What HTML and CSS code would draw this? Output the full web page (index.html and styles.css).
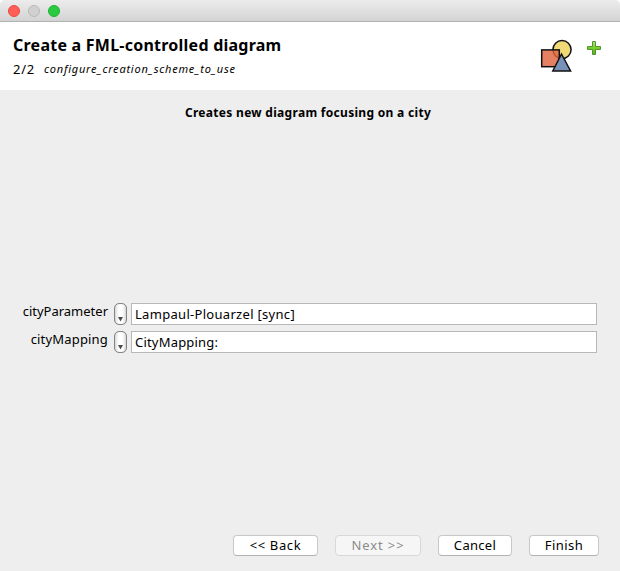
FILE: index.html
```html
<!DOCTYPE html>
<html lang="en">
<head>
<meta charset="utf-8">
<title>Create a FML-controlled diagram</title>
<link rel="stylesheet" href="styles.css">
</head>
<body>
<div class="window">
  <div class="titlebar"><i class="light red"></i><i class="light gray"></i><i class="light green"></i></div>
  <header class="header">
    <div class="heading">
      <h1>Create a FML-controlled diagram</h1>
      <p class="step"><span class="count">2/2</span><em>configure_creation_scheme_to_use</em></p>
    </div>
    <svg class="shapes" width="34" height="34" viewBox="0 0 34 34">
      <circle cx="22" cy="10.6" r="9.1" fill="#f0da78" stroke="#111" stroke-width="1.5"/>
      <rect x="1.7" y="10.9" width="17.6" height="16.8" fill="#e0603c" fill-opacity=".8" stroke="#111" stroke-width="1.5"/>
      <path d="M21.5 15 30.6 32H12.8Z" fill="#7791b9" stroke="#111" stroke-width="1.5"/>
    </svg>
    <svg class="plus" width="16" height="16" viewBox="0 0 16 16">
      <defs><linearGradient id="leaf" x2="0" y2="1"><stop offset="0" stop-color="#b0e67c"/><stop offset=".5" stop-color="#72d020"/><stop offset="1" stop-color="#50b80c"/></linearGradient></defs>
      <path d="M6.5 1.5h3v5h5v3h-5v5h-3v-5h-5v-3h5Z" fill="url(#leaf)" stroke="#55913a"/>
    </svg>
  </header>
  <main class="content">
    <h2>Creates new diagram focusing on a city</h2>
    <div class="form">
      <div class="row"><label class="parameter">cityParameter</label><button class="picker"><svg width="5" height="5" viewBox="0 0 5 5"><path d="M0 0h5L2.5 4.5Z" fill="#4a4a4a"/></svg></button><div class="field place">Lampaul-Plouarzel [sync]</div></div>
      <div class="row"><label class="mapping">cityMapping</label><button class="picker"><svg width="5" height="5" viewBox="0 0 5 5"><path d="M0 0h5L2.5 4.5Z" fill="#4a4a4a"/></svg></button><div class="field map">CityMapping:</div></div>
    </div>
  </main>
  <footer class="actions">
    <button class="action back">&lt;&lt; Back</button>
    <button class="action next" disabled>Next &gt;&gt;</button>
    <button class="action cancel">Cancel</button>
    <button class="action finish">Finish</button>
  </footer>
</div>
</body>
</html>
```
FILE: styles.css
```css
* { box-sizing: border-box; }
html { background: #fff; }
body { margin: 0; font: 13px/18px "Noto Sans", "Open Sans", sans-serif; color: #000; }
h1, h2, p { margin: 0; }
.window { width: 620px; height: 571px; display: flex; flex-direction: column; background: #eee; border-radius: 5px 5px 0 0; overflow: hidden; white-space: nowrap; }
.titlebar { height: 22px; flex: none; display: flex; gap: 8px; padding: 5px 8px; background: linear-gradient(#ececec, #d3d3d3); border-bottom: 1px solid #b1b1b1; }
.light { width: 12px; height: 12px; border-radius: 50%; border: 1px solid; }
.red { background: #ff5f57; border-color: #e9493f; }
.gray { background: #d0d0d0; border-color: #b9b9b9; }
.green { background: #2acb42; border-color: #21b032; }
.header { height: 68px; flex: none; display: flex; background: #fff; padding: 0 18px 0 13px; }
.heading { flex: 1; padding-top: 12px; }
h1 { font-size: 16px; line-height: 22px; font-weight: 700; letter-spacing: .24px; }
.step { display: flex; margin-top: 4px; }
.count { width: 31px; letter-spacing: .8px; }
.step em { font-size: 11px; letter-spacing: .78px; }
.shapes { margin: 17px 12px 0 0; }
.plus { margin-top: 18px; }
.content { flex: 1; }
h2 { font-size: 12px; line-height: 18px; font-weight: 700; letter-spacing: .3px; text-align: center; padding: 14px 4px 0 0; }
.form { display: flex; flex-direction: column; gap: 6px; margin-top: 181px; padding-right: 23px; }
.row { height: 22px; display: flex; }
label { width: 108px; text-align: right; flex: none; line-height: 16px; }
.mapping { letter-spacing: .18px; }
.picker { width: 13px; height: 22px; margin: 0 4px 0 6px; padding: 10px 0 0; flex: none; border: 1px solid #858585; border-radius: 5px; background: linear-gradient(90deg, #ddd, #fff 35%, #fff 65%, #ddd); box-shadow: inset 0 0 1px #aaa; display: flex; align-items: center; justify-content: center; }
.field { flex: 1; border: 1px solid #b8b8b8; background: #fff; padding-left: 3px; line-height: 21px; }
.place { letter-spacing: .3px; }
.map { letter-spacing: .2px; }
.actions { flex: none; height: 36px; display: flex; padding-left: 233px; }
.action { height: 21px; padding: 0; border: 1px solid #c8c8c8; border-bottom-color: #b2b2b2; border-radius: 4px; background: #fff; font: inherit; line-height: 19px; color: #000; text-align: center; }
.back { width: 85px; margin-right: 17px; letter-spacing: .6px; }
.next { width: 86px; margin-right: 17px; background: #f6f6f6; color: #8b8b8b; border-color: #d8d8d8; letter-spacing: .9px; }
.cancel { width: 74px; margin-right: 17px; letter-spacing: .3px; }
.finish { width: 70px; letter-spacing: .45px; }
```
